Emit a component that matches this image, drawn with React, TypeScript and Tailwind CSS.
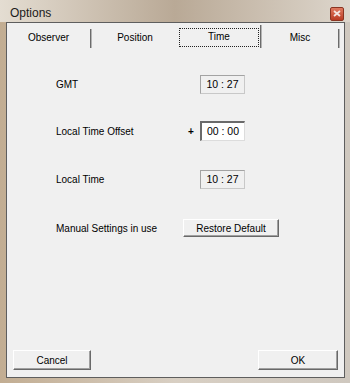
const Tab = ({ label, width }: { label: string; width: string }) => {
  return (
    <div className={`${width} flex items-center justify-center pt-[3px] h-full`}>
      {label}
    </div>
  );
};

const Sep = ({ tall }: { tall?: boolean }) => {
  return (
    <div
      className={`w-[2px] self-end border-l border-[#6b6b6b] border-r border-r-[#b4b4b4] ${
        tall ? "h-[23px]" : "h-[19px]"
      }`}
    ></div>
  );
};

const Button = ({ label, className }: { label: string; className: string }) => {
  return (
    <div
      className={`${className} flex items-center justify-center bg-[#f0f0f0] border border-t-white border-l-white border-r-[#696969] border-b-[#696969] shadow-[inset_-1px_-1px_0_#a0a0a0]`}
    >
      {label}
    </div>
  );
};

const App = () => {
  return (
    <div
      className="w-[350px] h-[383px] flex flex-col bg-gradient-to-r from-[#c2ad92] via-[#d8cfc3] to-[#cfc8bf] text-black"
      style={{ fontFamily: '"Liberation Sans", Arial, sans-serif' }}
    >
      {/* title bar */}
      <div className="h-[22px] flex items-center justify-between pl-[10px] pr-[6px] bg-gradient-to-r from-[#e4ddd2] via-[#b9a996] to-[#ddd6cc]">
        <div className="text-[12px] text-[#1b1b1b] pt-[4px]">Options</div>
        <div className="w-[14px] h-[14px] mt-[5px] rounded-[2px] border border-[#8a3421] bg-gradient-to-b from-[#e07a60] to-[#b93a22] flex items-center justify-center">
          <svg width="8" height="7" viewBox="0 0 8 7">
            <path d="M1 1 L7 6 M7 1 L1 6" stroke="#f4e4e0" strokeWidth="1.8" />
          </svg>
        </div>
      </div>

      {/* client */}
      <div className="mx-[5px] ml-[6px] mb-[5px] flex-1 flex flex-col bg-[#f0f0f0] border border-[#5e5e5e] text-[10px]">
        {/* tabs */}
        <div className="h-[25px] flex">
          <Tab label="Observer" width="w-[83px]" />
          <Sep />
          <Tab label="Position" width="w-[86px]" />
          <div className="w-[82px] h-full flex items-center justify-center pt-[5px] pb-[1px] px-[1px]">
            <div className="w-full h-full border border-dotted border-[#222] flex items-center justify-center pb-[2px]">
              Time
            </div>
          </div>
          <Sep tall />
          <Tab label="Misc" width="w-[76px]" />
          <Sep />
        </div>

        {/* content */}
        <div className="flex-1 flex flex-col pl-[49px]">
          <div className="mt-[27px] h-[19px] flex items-center">
            <div className="w-[144px]">GMT</div>
            <div className="w-[45px] h-[19px] flex items-center justify-center text-[10.5px] border border-[#a3a3a3] border-b-[#c8c8c8] border-r-[#c8c8c8]">
              10 : 27
            </div>
          </div>

          <div className="mt-[27px] h-[20px] flex items-center">
            <div className="w-[132px]">Local Time Offset</div>
            <div className="w-[12px] font-bold">+</div>
            <div className="w-[45px] h-[20px] flex items-center justify-center text-[10.5px] bg-white border-t-2 border-l-2 border-[#6a6a6a] border-b border-r border-b-[#dcdcdc] border-r-[#dcdcdc]">
              00 : 00
            </div>
          </div>

          <div className="mt-[29px] h-[19px] flex items-center">
            <div className="w-[144px]">Local Time</div>
            <div className="w-[45px] h-[19px] flex items-center justify-center text-[10.5px] border border-[#a3a3a3] border-b-[#c8c8c8] border-r-[#c8c8c8]">
              10 : 27
            </div>
          </div>

          <div className="mt-[30px] h-[18px] flex items-center">
            <div className="w-[127px]">Manual Settings in use</div>
            <Button label="Restore Default" className="w-[96px] h-[18px]" />
          </div>
        </div>

        {/* bottom buttons */}
        <div className="flex justify-between px-[6px] mb-[7px]">
          <Button label="Cancel" className="w-[78px] h-[20px]" />
          <Button label="OK" className="w-[80px] h-[20px]" />
        </div>
      </div>
    </div>
  );
};

export default App;
